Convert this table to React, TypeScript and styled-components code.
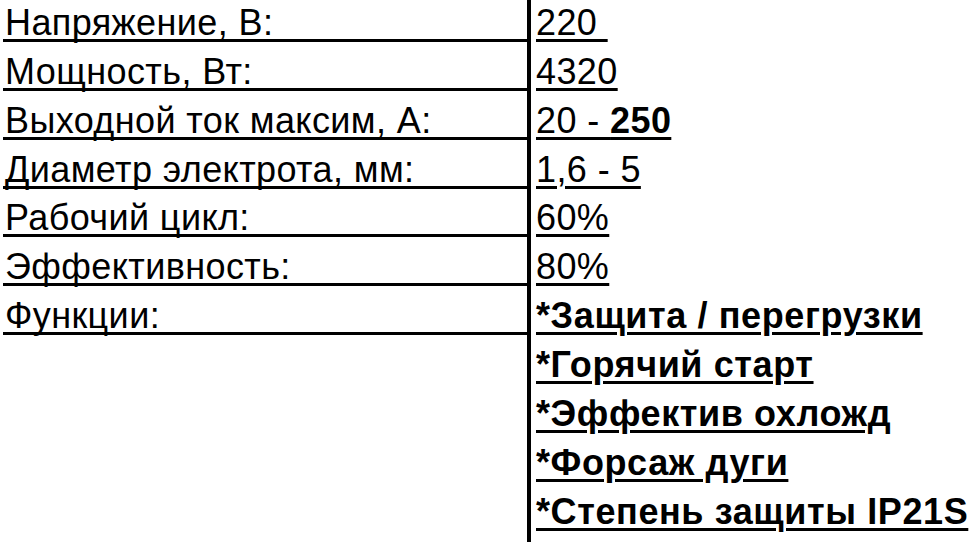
import React from 'react'
import styled, { createGlobalStyle } from 'styled-components'

const GlobalStyle = createGlobalStyle`
  html, body {
    margin: 0;
    padding: 0;
    background: #fff;
    overflow: hidden;
  }
  body {
    font-family: 'Liberation Sans', Arial, sans-serif;
    color: #000;
  }
`

type Spec = {
  label?: string
  value: React.ReactNode
  bold?: boolean
}

const specs: Spec[] = [
  { label: 'Напряжение, В:', value: '220 ' },
  { label: 'Мощность, Вт:', value: '4320' },
  {
    label: 'Выходной ток максим, А:',
    value: (
      <>
        20 - <b>250</b>
      </>
    ),
  },
  { label: 'Диаметр электрота, мм:', value: '1,6 - 5' },
  { label: 'Рабочий цикл:', value: '60%' },
  { label: 'Эффективность:', value: '80%' },
  { label: 'Функции:', value: '*Защита / перегрузки', bold: true },
  { value: '*Горячий старт', bold: true },
  { value: '*Эффектив охложд', bold: true },
  { value: '*Форсаж дуги', bold: true },
  { value: '*Степень защиты IP21S', bold: true },
]

const App = () => (
  <>
    <GlobalStyle />
    <Sheet>
      {specs.map((s, i) => (
        <React.Fragment key={i}>
          <Label $filled={!!s.label}>{s.label}</Label>
          <ValueCell>
            <Value $bold={s.bold}>{s.value}</Value>
          </ValueCell>
        </React.Fragment>
      ))}
      <Label $filled={false} />
      <ValueCell />
    </Sheet>
  </>
)

export default App

const Sheet = styled.div`
  display: grid;
  grid-template-columns: 527px 1fr;
  grid-auto-rows: 48.9px;
  margin-top: -7px;
  height: 560px;
  overflow: hidden;
`

const Label = styled.div<{ $filled: boolean }>`
  display: flex;
  align-items: flex-end;
  box-sizing: border-box;
  margin-left: 3px;
  padding: 0 0 0 2px;
  font-size: 36px;
  line-height: 32px;
  letter-spacing: 0.4px;
  white-space: pre;
  border-bottom: ${(p) => (p.$filled ? '3px solid #000' : 'none')};
  padding-bottom: ${(p) => (p.$filled ? '0' : '3px')};
`

const ValueCell = styled.div`
  display: flex;
  align-items: flex-end;
  box-sizing: border-box;
  border-left: 4px solid #000;
  padding: 0 0 3px 5px;
`

const Value = styled.span<{ $bold?: boolean }>`
  font-size: 36px;
  line-height: 32px;
  letter-spacing: ${(p) => (p.$bold ? '0.6px' : '0.4px')};
  white-space: pre;
  font-weight: ${(p) => (p.$bold ? 700 : 400)};
  text-decoration: underline;
  text-decoration-thickness: 3px;
  text-underline-offset: 4px;

  b {
    font-weight: 700;
  }
`
